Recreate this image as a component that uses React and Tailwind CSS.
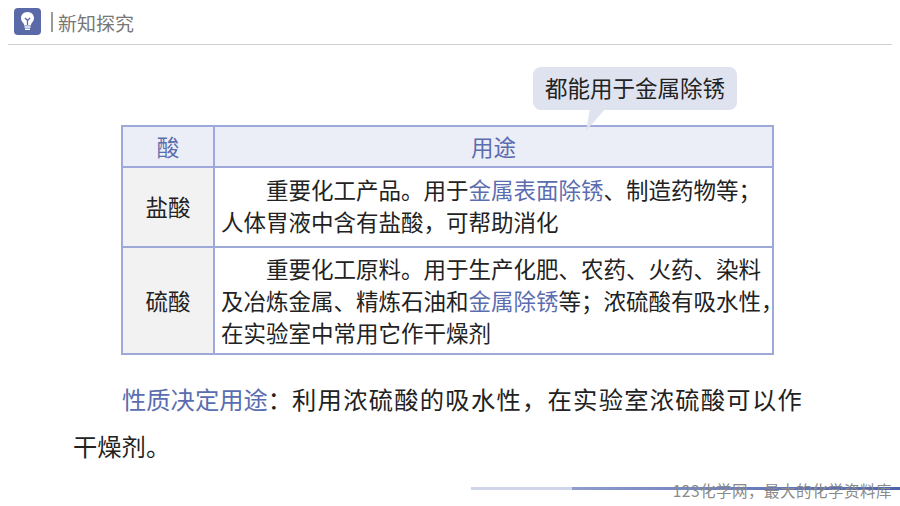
const cjk = { fontFamily: '"Noto Sans CJK SC", "Liberation Sans", sans-serif' };

function Blue({ children }) {
  return <span className="text-[#5b6db0]">{children}</span>;
}

export default function App() {
  return (
    <div className="relative w-[900px] h-[506px] bg-white overflow-hidden flex flex-col" style={cjk}>
      <header className="mx-2 h-[45px] shrink-0 flex items-center border-b border-[#cfcfcf] pl-[6px] pb-[1px]">
        <div className="w-[27px] h-[27px] rounded-[4px] bg-[#5a6aa8] flex items-center justify-center">
          <svg width="17" height="21" viewBox="0 0 17 21" fill="none">
            <path d="M8.5 1C4.600 1 2 3.900 2 7.200c0 2.600 1.600 3.900 2.600 5.400.4.700.5 1.200.5 1.900h6.800c0-.7.1-1.200.5-1.900C13.400 11.100 15 9.800 15 7.200 15 3.900 12.400 1 8.500 1z" fill="#fff" />
            <path d="M6 7l2.500 2.500L11 7M8.500 9.500V14" stroke="#5a6aa8" strokeWidth="1.300" />
            <path d="M5.500 16h6M6 18.300h5" stroke="#fff" strokeWidth="1.500" />
          </svg>
        </div>
        <div className="ml-[10px] w-[2px] h-[20px] bg-[#9a9a9a]" />
        <div className="ml-[5px] text-[19px] leading-[24px] text-[#777777] relative top-[1px]">新知探究</div>
      </header>

      <div className="relative ml-[121px] mt-[80px] w-[653px] border-2 border-[#9ea9d9] text-[22.5px] text-[#222222]">
        <div className="flex h-[41px] bg-[#eceef7] text-[#5b6db0] border-b-2 border-[#9ea9d9]">
          <div className="w-[92px] shrink-0 flex items-center justify-center border-r-2 border-[#9ea9d9]">酸</div>
          <div className="flex-1 flex items-center justify-center">用途</div>
        </div>
        <div className="flex h-[80px] border-b-2 border-[#9ea9d9]">
          <div className="w-[92px] shrink-0 bg-[#f2f2f2] flex items-center justify-center border-r-2 border-[#9ea9d9]">盐酸</div>
          <div className="flex-1 px-[6px] pt-[5px] leading-[32px] whitespace-nowrap">
            <div className="pl-[45px]">重要化工产品。用于<Blue>金属表面除锈</Blue>、制造药物等；</div>
            <div>人体胃液中含有盐酸，可帮助消化</div>
          </div>
        </div>
        <div className="flex h-[105px]">
          <div className="w-[92px] shrink-0 bg-[#f2f2f2] flex items-center justify-center border-r-2 border-[#9ea9d9]">硫酸</div>
          <div className="flex-1 px-[6px] pt-[4px] leading-[32px] whitespace-nowrap">
            <div className="pl-[45px]">重要化工原料。用于生产化肥、农药、火药、染料</div>
            <div>及冶炼金属、精炼石油和<Blue>金属除锈</Blue>等；浓硫酸有吸水性，</div>
            <div>在实验室中常用它作干燥剂</div>
          </div>
        </div>

        <div className="absolute left-[410px] top-[-60px] w-[204px] h-[43px] rounded-[8px] bg-[#dfe2ef] flex items-center justify-center text-[22.500px] text-[#222222] whitespace-nowrap pb-[1px]">
          都能用于金属除锈
        </div>
        <svg className="absolute left-[461px] top-[-18px]" width="22" height="24" viewBox="0 0 22 24">
          <path d="M6 0H21L2 22z" fill="#dfe2ef" />
        </svg>
      </div>

      <div className="mt-[20px] ml-[73px] w-[760px] text-[24.300px] leading-[47px] text-[#222222] whitespace-nowrap">
        <div className="pl-[49px]"><Blue>性质决定用途</Blue>：<span className="tracking-[1.250px]">利用浓硫酸的吸水性，在实验室浓硫酸可以作</span></div>
        <div>干燥剂。</div>
      </div>

      <div className="absolute left-[471px] top-[487px] w-[429px] h-[3px] flex">
        <div className="w-[101px] bg-[#d0d5ea]" />
        <div className="flex-1 bg-gradient-to-r from-[#8f9ccc] to-[#4e62a8]" />
      </div>
      <div className="absolute right-[8px] top-[480px] text-[15.500px] leading-[20px] tracking-[0.5px] text-[#8a8a8a] whitespace-nowrap">
        123化学网，最大的化学资料库
      </div>
    </div>
  );
}
